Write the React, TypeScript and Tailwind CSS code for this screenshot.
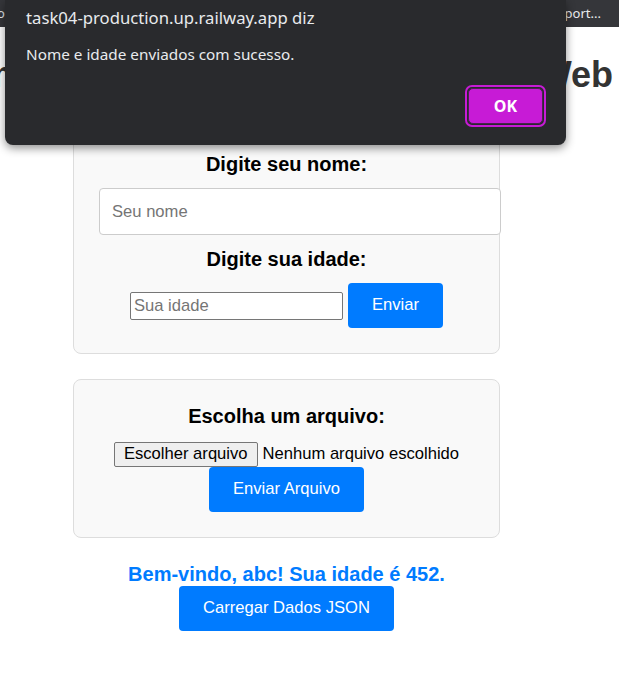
import React from "react";

const page = { fontFamily: '"Liberation Sans", Arial, sans-serif' };
const chrome = { fontFamily: '"Noto Sans", "Open Sans", sans-serif' };

function BlueButton({ children }: { children: React.ReactNode }) {
  return (
    <button className="h-[45px] shrink-0 rounded-[4px] bg-[#007bff] px-6 text-[16.6px] text-white">
      {children}
    </button>
  );
}

function Label({ children }: { children: React.ReactNode }) {
  return <div className="text-[20px] font-bold leading-[22px] text-black">{children}</div>;
}

// fake alert from the browser, lies over the page
function AlertDialog() {
  return (
    <div
      className="absolute left-[5px] top-0 flex h-[145px] w-[561px] flex-col rounded-b-[8px] bg-[#292a2d] px-[21px] pt-[6px] shadow-[0_3px_10px_rgba(0,0,0,0.45)]"
      style={chrome}
    >
      <div className="text-[16.7px] leading-[24px] text-[#e8eaed]">task04-production.up.railway.app diz</div>
      <div className="mt-[14px] text-[15.3px] leading-[20px] text-[#e8eaed]">Nome e idade enviados com sucesso.</div>
      <div className="mt-[21px] flex justify-end">
        <div className="mr-[-1px] rounded-[7px] border-2 border-[#c71bd6] p-[1px]">
          <button className="flex h-[36px] w-[75px] items-center justify-center rounded-[5px] border border-[#4a2150] bg-[#c71bd6] text-[16px] font-bold text-white">
            OK
          </button>
        </div>
      </div>
    </div>
  );
}

export default function App() {
  return (
    <div className="relative h-[684px] w-[619px] overflow-hidden bg-white" style={page}>
      {/* bookmarks bar */}
      <div className="flex h-[27px] items-center justify-between bg-[#35363a] pr-[18px] text-[13px] text-[#e8eaed]" style={chrome}>
        <span className="-ml-[3px]">o</span>
        <span>Import...</span>
      </div>

      <div className="mt-[27px] flex justify-end whitespace-nowrap pr-[6px]">
        <h1 className="text-[36px] font-bold leading-[42px] text-[#333]">Bem-vindo à Aplicação Formulário Web</h1>
      </div>

      <div className="ml-[73px] mt-[31px] flex w-[427px] flex-col items-center">
        <div className="flex w-full flex-col items-center rounded-[8px] border border-[#ddd] bg-[#f9f9f9] p-[25px]">
          <Label>Digite seu nome:</Label>
          <input
            placeholder="Seu nome"
            className="mt-[13px] h-[47px] w-[402px] self-start rounded-[4px] border border-[#ccc] bg-white px-[12px] text-[16.6px] placeholder:text-[#757575]"
          />
          <div className="mt-[13px]">
            <Label>Digite sua idade:</Label>
          </div>
          <div className="mt-[13px] flex items-center gap-[5px]">
            <input
              placeholder="Sua idade"
              className="h-[28px] w-[213px] rounded-[2px] border border-[#767676] bg-white px-[3px] text-[16.6px] placeholder:text-[#757575]"
            />
            <BlueButton>Enviar</BlueButton>
          </div>
        </div>

        <div className="mt-[25px] flex w-full flex-col items-center rounded-[8px] border border-[#ddd] bg-[#f9f9f9] p-[25px]">
          <Label>Escolha um arquivo:</Label>
          <div className="mt-[15px] flex h-[25px] items-center gap-[5px] text-[16.6px] text-black">
            <span className="flex h-[25px] items-center rounded-[2px] border border-[#767676] bg-[#efefef] px-[9px]">
              Escolher arquivo
            </span>
            <span>Nenhum arquivo escolhido</span>
          </div>
          <BlueButton>Enviar Arquivo</BlueButton>
        </div>

        <div className="mt-[25px] text-[20px] font-bold leading-[23px] text-[#007bff]">
          Bem-vindo, abc! Sua idade é 452.
        </div>
        <BlueButton>Carregar Dados JSON</BlueButton>
      </div>

      <AlertDialog />
    </div>
  );
}
